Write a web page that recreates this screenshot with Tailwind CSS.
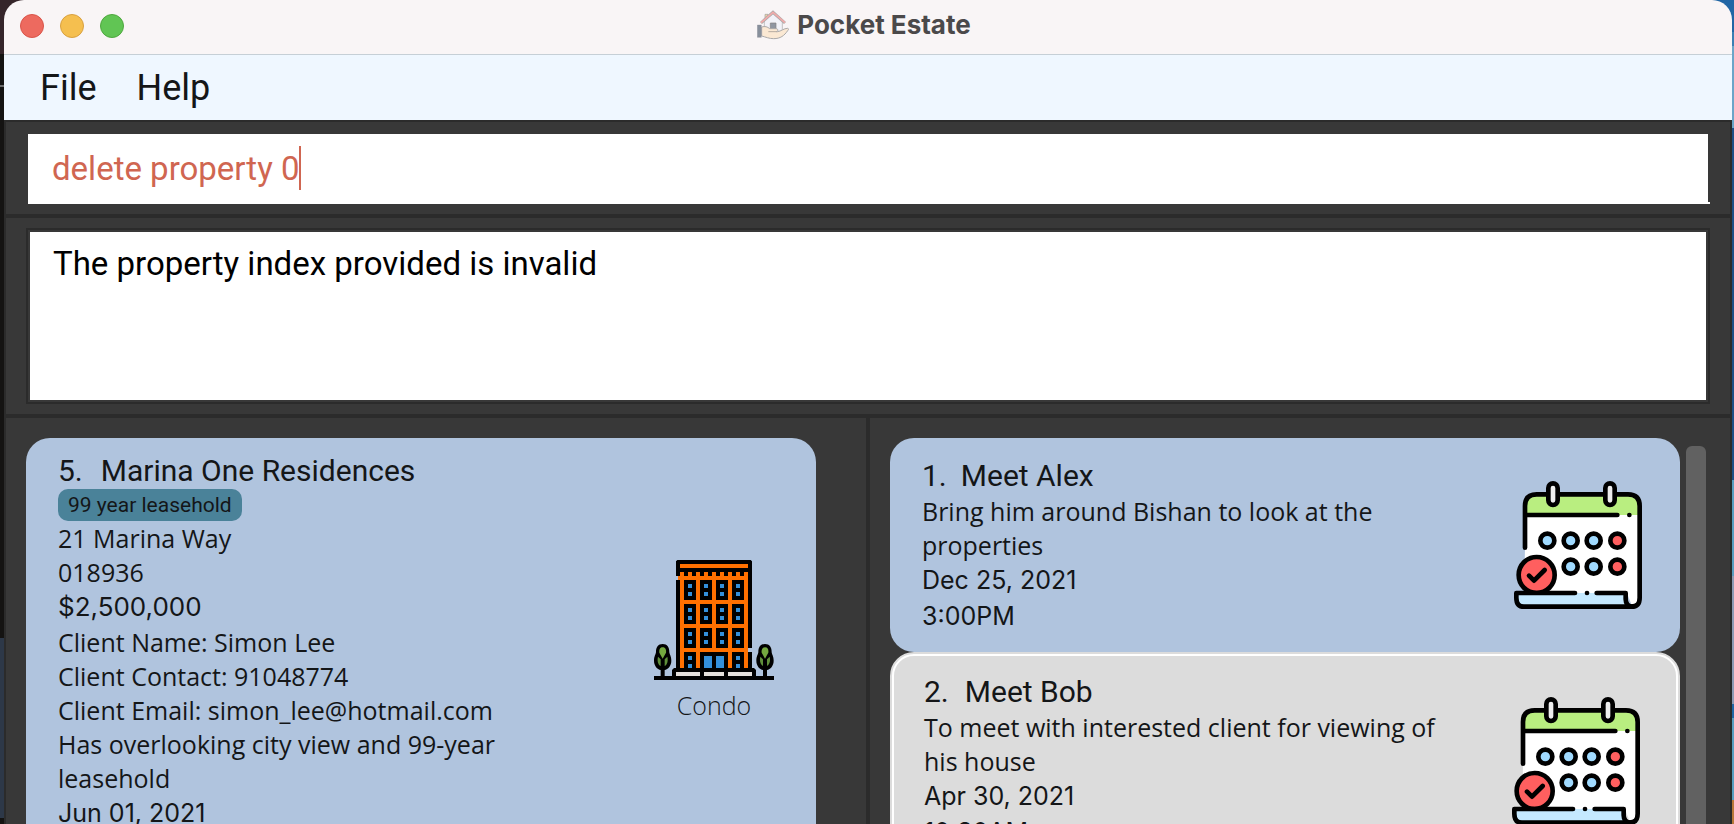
<!DOCTYPE html>
<html lang="en">
<head>
<meta charset="utf-8">
<title>Pocket Estate</title>
<script src="https://cdn.jsdelivr.net/npm/@tailwindcss/browser@4"></script>
</head>
<body class="flex h-screen overflow-hidden bg-black font-[Roboto,sans-serif] text-[#141618]">

<!-- desktop behind the window, left edge -->
<div class="relative z-0 flex w-1 shrink-0 flex-col bg-[#141312]">
  <div class="h-[54px] w-8 bg-[#35252a]"></div>
  <div class="h-[31px]"></div>
  <div class="h-[2px] bg-[#6b6b6b]"></div>
  <div class="h-[551px]"></div>
  <div class="h-[180px] bg-[#2d3848]"></div>
</div>

<div class="relative z-10 flex min-w-0 flex-1 flex-col overflow-hidden rounded-t-[20px]">
  <header class="flex h-[55px] shrink-0 items-center border-b border-[#c6cfd6] bg-[#f9f5f6] px-4 pb-[2px]">
    <div class="flex flex-1 gap-4">
      <button aria-label="Close" class="size-6 rounded-full border border-[#d9544a] bg-[#ed6a5f]"></button>
      <button aria-label="Minimize" class="size-6 rounded-full border border-[#d8a040] bg-[#f5bf4f]"></button>
      <button aria-label="Zoom" class="size-6 rounded-full border border-[#4fa73f] bg-[#61c554]"></button>
    </div>
    <div class="flex items-center gap-2 pb-[2px] pr-2">
      <svg class="size-8 opacity-60" viewBox="0 0 96 88" aria-hidden="true">
        <path d="M24 12h9v14l-9 8z" fill="#e8c070" stroke="#666" stroke-width="2"/>
        <path d="M22 30L48 8l28 24v36H22z" fill="#eef1fa" stroke="#777" stroke-width="2"/>
        <path d="M12 38L48 6l36 32" fill="none" stroke="#777" stroke-width="9"/>
        <path d="M12 37L48 6l36 31" fill="none" stroke="#ee7a78" stroke-width="5"/>
        <path d="M40 38h17v22H40z" fill="#4c5869" stroke="#333" stroke-width="2"/>
        <path d="M14 50c10-3 17-1 24 5h20c6 1 6 8 0 9h4c10-1 18-10 30-10 4 1 3 4 0 7C82 76 70 85 50 85c-14 0-24-5-36-8z" fill="#fde0bd" stroke="#777" stroke-width="3"/>
        <path d="M34 64h25" stroke="#8a7a68" stroke-width="3"/>
        <path d="M1 44h12v37H1z" fill="#3c4d60" stroke="#445" stroke-width="1"/>
      </svg>
      <h1 class="font-[Inter,sans-serif] text-[26px] leading-8 font-bold text-[#4b494a]">Pocket Estate</h1>
    </div>
    <div class="flex-1"></div>
  </header>

  <nav class="flex h-[65px] shrink-0 items-center gap-10 bg-[#eff7ff] px-9 text-[36px]">
    <button>File</button>
    <button>Help</button>
  </nav>

  <main class="flex min-h-0 flex-1 flex-col border-2 border-b-0 border-[#2b2b2b] bg-[#383838]">
    <div class="shrink-0 border-b-4 border-[#2b2b2b] pt-3 pr-5 pb-[10px] pl-[22px]">
      <div class="relative border-b-2 border-white pr-[2px]">
        <input aria-label="Command" value="delete property 0" spellcheck="false" class="block h-[68px] w-full bg-white px-6 text-[33px] text-[#d06651] outline-none">
        <span class="absolute top-3 left-[271px] h-11 w-[2px] bg-[#d06651]"></span>
      </div>
    </div>

    <div class="shrink-0 border-b-4 border-[#2b2b2b] px-5 py-[10px]">
      <div class="border-2 border-[#2b2b2b] p-[2px]">
        <textarea aria-label="Result" readonly spellcheck="false" class="block h-[168px] w-full resize-none bg-white px-[23px] py-[10px] text-[33px] leading-11 text-black outline-none">The property index provided is invalid</textarea>
      </div>
    </div>

    <div class="grid min-h-0 flex-1 grid-cols-[minmax(0,1fr)_4px_minmax(0,1fr)] grid-rows-[minmax(0,1fr)]">
      <section aria-label="Properties" class="overflow-hidden pt-5 pr-[50px] pl-5">
        <article class="flex h-[460px] items-start justify-between rounded-[24px] bg-[#b0c4de] pt-[15px] pr-[42px] pl-8 font-['Open_Sans',sans-serif] text-[25px] leading-[34px]">
          <div class="max-w-[480px]">
            <h2 class="flex gap-[18px] font-[Roboto,sans-serif] text-[30px] leading-9"><span>5.</span><span>Marina One Residences</span></h2>
            <span class="flex h-8 w-fit items-center rounded-[10px] bg-[#4a8299] px-[10px] font-[Roboto,sans-serif] text-[21px]">99 year leasehold</span>
            <p>21 Marina Way</p>
            <p>018936</p>
            <p class="font-[Inter,sans-serif] text-[26px] leading-9">$2,500,000</p>
            <p>Client Name: Simon Lee</p>
            <p>Client Contact: 91048774</p>
            <p>Client Email: simon_lee@hotmail.com</p>
            <p>Has overlooking city view and 99-year leasehold</p>
            <p class="font-[Inter,sans-serif] leading-9">Jun 01, 2021</p>
          </div>
          <figure class="mt-[107px] flex flex-col items-center gap-2">
            <svg class="size-[120px]" viewBox="0 0 360 360" aria-hidden="true">
              <defs>
                <g id="pane"><path d="M0 0h36v60H0z"/><path d="M12 12h12v12H12zM12 36h12v12H12z" fill="#3390dc"/></g>
                <g id="floor"><use href="#pane" x="90"/><use href="#pane" x="138"/><use href="#pane" x="186"/><use href="#pane" x="234"/></g>
                <g id="tree">
                  <path d="M26 252c-14 0-20 10-20 24 0 6-6 12-6 26 0 16 10 26 20 28v20h12v-20c10-2 20-12 20-28 0-14-6-20-6-26 0-14-6-24-20-24z"/>
                  <path d="M26 262c-9 0-11 8-10 16l10 18 10-18c1-8-1-16-10-16z" fill="#74a93f"/>
                  <path d="M12 290c-3 12 0 24 8 28V298zM40 290c3 12 0 24-8 28V298z" fill="#5f8f3a"/>
                </g>
              </defs>
              <path d="M70 0h220l4 4v260h-12v12h12v50H66V60h12V48H66V4z"/>
              <path d="M78 12h204v12H78zM78 36h12v12h12V36h12v12h12V36h12v12h12V36h12v12h12V36h12v12h12V36h12v12h12V36h12v12h12V36h12v12h12V36h12v288H78V60h-6V48h6z" fill="#ff7000"/>
              <use href="#floor" y="60"/><use href="#floor" y="132"/><use href="#floor" y="204"/><use href="#floor" y="276"/>
              <path d="M138 276h84v48h-84z"/>
              <path d="M150 288h24v36h-24zM186 288h24v36h-24z" fill="#3390dc"/>
              <path d="M60 324h240l6 6v20H54v-20z"/>
              <path d="M66 336h72v12H66zM150 336h60v12h-60zM222 336h72v12h-72z" fill="#e4e0dc"/>
              <use href="#tree"/><use href="#tree" x="307"/>
              <path d="M0 348h360v12H0z"/>
            </svg>
            <figcaption class="font-light">Condo</figcaption>
          </figure>
        </article>
      </section>

      <div class="bg-[#2b2b2b]"></div>

      <section aria-label="Appointments" class="flex gap-[6px] overflow-hidden pt-5 pr-6 pl-5">
        <div class="min-w-0 flex-1 font-['Open_Sans',sans-serif] text-[25px] leading-[34px]">
          <article class="flex h-[214px] items-center justify-between rounded-[24px] bg-[#b0c4de] pt-[2px] pr-[38px] pl-8">
            <div class="max-w-[520px]">
              <h2 class="flex gap-[14px] font-[Roboto,sans-serif] text-[30px] leading-9"><span>1.</span><span>Meet Alex</span></h2>
              <p>Bring him around Bishan to look at the properties</p>
              <p class="font-[Inter,sans-serif] leading-9">Dec 25, 2021</p>
              <p class="font-[Inter,sans-serif] leading-9">3:00PM</p>
            </div>
            <svg class="mb-[2px] size-32 shrink-0" viewBox="0 0 384 384" aria-hidden="true">
              <g id="calendar" stroke-linecap="round" stroke-linejoin="round">
                <path d="M33 100V200L30 340H340L355 377C370 377 377 368 377 355V100z" fill="#fff"/>
                <path d="M33 102V75C33 52 45 40 68 40H340C364 40 372 52 372 75V102z" fill="#b9ee80"/>
                <path d="M33 200V75C33 52 45 40 68 40H342C366 40 377 52 377 75V350C377 368 370 377 352 377" fill="none" stroke="#000" stroke-width="14"/>
                <path d="M38 102H310M346 102h.1" fill="none" stroke="#000" stroke-width="14"/>
                <rect x="103" y="7" width="28" height="65" rx="14" fill="#eee" stroke="#000" stroke-width="14"/>
                <rect x="274" y="7" width="28" height="65" rx="14" fill="#eee" stroke="#000" stroke-width="14"/>
                <g fill="#a0daff" stroke="#000" stroke-width="14">
                  <circle cx="100" cy="179" r="21"/><circle cx="170" cy="179" r="21"/><circle cx="239" cy="179" r="21"/>
                  <circle cx="170" cy="257" r="21"/><circle cx="239" cy="257" r="21"/>
                </g>
                <g fill="#ff5f5f" stroke="#000" stroke-width="14">
                  <circle cx="310" cy="179" r="21"/><circle cx="310" cy="257" r="21"/>
                  <circle cx="68" cy="282" r="54"/>
                </g>
                <path d="M45 284L60 299L92 267" fill="none" stroke="#000" stroke-width="14"/>
                <path d="M7 336H335V377H30C14 377 7 366 7 350z" fill="#c5e9ff"/>
                <path d="M183 336H7V350C7 366 14 377 30 377H355M219 336h.1M248 336H335V355C335 368 342 377 356 377" fill="none" stroke="#000" stroke-width="14"/>
              </g>
            </svg>
          </article>

          <article class="h-[218px] rounded-[24px] border-2 border-[#dcdcdc] bg-[#dcdcdc]">
            <div class="flex h-full items-center justify-between rounded-[22px] border-2 border-white pr-9 pl-[30px]">
              <div class="mt-[2px] max-w-[520px]">
                <h2 class="flex gap-4 font-[Roboto,sans-serif] text-[30px] leading-9"><span>2.</span><span>Meet Bob</span></h2>
                <p>To meet with interested client for viewing of his house</p>
                <p class="font-[Inter,sans-serif] leading-9">Apr 30, 2021</p>
                <p class="font-[Inter,sans-serif] leading-9">10:30AM</p>
              </div>
              <svg class="size-32 shrink-0" viewBox="0 0 384 384" aria-hidden="true"><use href="#calendar"/></svg>
            </div>
          </article>
        </div>
        <div class="mt-2 w-5 shrink-0 rounded-t-[6px] bg-[#616161]"></div>
      </section>
    </div>
  </main>
</div>

<!-- desktop behind the window, right edge -->
<div class="relative z-0 flex w-[2px] shrink-0 flex-col items-end bg-[#8e9bb5]">
  <div class="h-8 w-8 shrink-0 bg-[#2166a5]"></div>
  <div class="h-[14px] w-full shrink-0 bg-[#3a7fb3]"></div>
  <div class="h-[82px] w-full shrink-0 bg-[#6aa5c8]"></div>
  <div class="h-[352px] w-full shrink-0 bg-[#1d4f86]"></div>
  <div class="h-24 w-full shrink-0 bg-[#5b9dc0]"></div>
  <div class="h-32 w-full shrink-0 bg-[#8e9bb5]"></div>
  <div class="h-[14px] w-full shrink-0 bg-[#2166a5]"></div>
  <div class="h-[82px] w-full shrink-0 bg-[#5b9dc0]"></div>
  <div class="w-full flex-1 bg-[#b87838]"></div>
</div>
</body>
</html>
